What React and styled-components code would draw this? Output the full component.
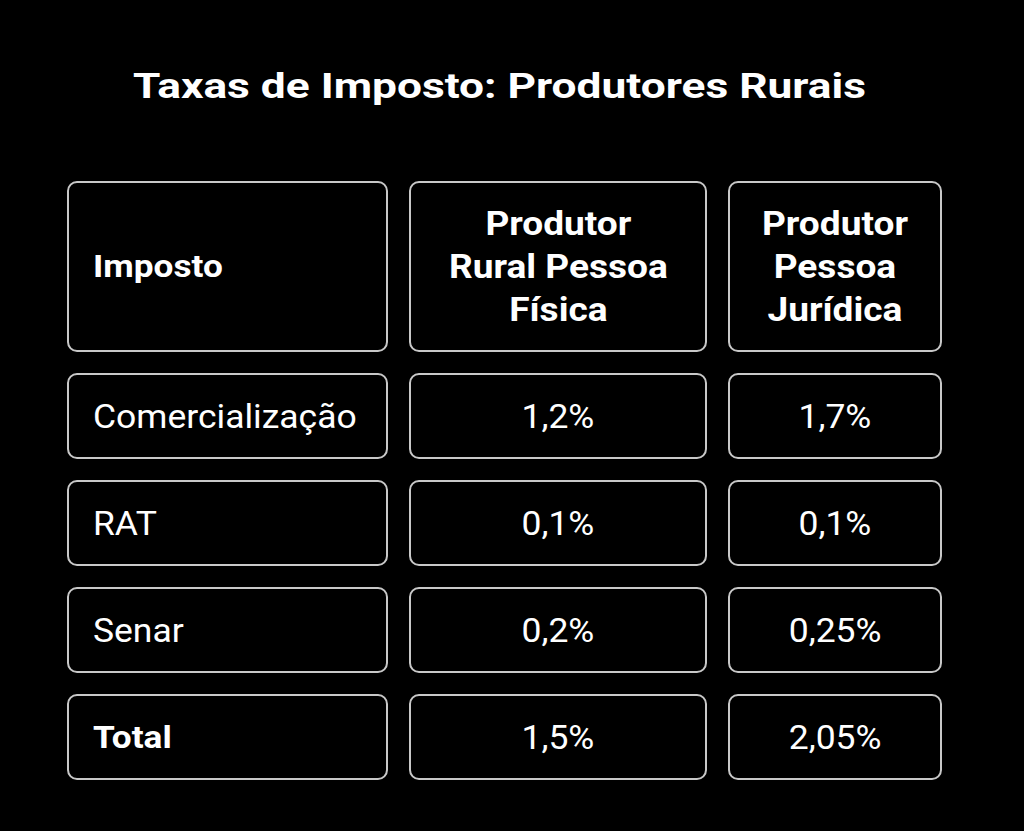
import React from 'react'
import styled, {createGlobalStyle} from 'styled-components'

const GlobalStyle = createGlobalStyle`
  html, body {
    margin: 0;
    padding: 0;
    background: #000;
  }
  body {
    font-family: 'Roboto', 'Liberation Sans', sans-serif;
    color: #fff;
  }
`
const Page = styled.div`
  width: 1024px;
  height: 831px;
  background: #000;
  display: flex;
  flex-direction: column;
  padding: 59px 0 0 67px;
  box-sizing: border-box;
`
const Title = styled.h1`
  margin: 0 0 0 66px;
  font-size: 35px;
  font-weight: 700;
  line-height: 56px;
  white-space: nowrap;
`
const Stretch = styled.span`
  display: inline-block;
  transform: scaleX(${props => props.sx});
  transform-origin: ${props => props.origin || 'center'};
  white-space: nowrap;
`
const Table = styled.div`
  margin-top: 66px;
  display: grid;
  grid-template-columns: 321px 298px 214px;
  grid-template-rows: 171px 86px 86px 86px 86px;
  column-gap: 21px;
  row-gap: 21px;
`
const Cell = styled.div`
  border: 2px solid #c8c8c8;
  border-radius: 10px;
  box-sizing: border-box;
  display: flex;
  align-items: center;
  justify-content: ${props => props.left ? 'flex-start' : 'center'};
  text-align: ${props => props.left ? 'left' : 'center'};
  padding: 0 ${props => props.left ? '24px' : '6px'};
  font-size: ${props => props.size || 33}px;
  font-weight: ${props => props.bold ? 700 : 400};
  line-height: 43px;
`

const rows = [
    ['Comercialização', '1,2%', '1,7%'],
    ['RAT', '0,1%', '0,1%'],
    ['Senar', '0,2%', '0,25%'],
]

const App = () => (
    <>
        <GlobalStyle/>
        <Page>
            <Title><Stretch sx={1.265} origin='left'>Taxas de Imposto: Produtores Rurais</Stretch></Title>
            <Table>
                <Cell left bold size={32}><Stretch sx={1.1} origin='left'>Imposto</Stretch></Cell>
                <Cell bold size={34}>
                    <Stretch sx={1.09}>Produtor<br/>Rural Pessoa<br/>Física</Stretch>
                </Cell>
                <Cell bold size={34}>
                    <Stretch sx={1.09}>Produtor<br/>Pessoa<br/>Jurídica</Stretch>
                </Cell>
                {rows.map(r => (
                    <React.Fragment key={r[0]}>
                        <Cell left><Stretch sx={1.075} origin='left'>{r[0]}</Stretch></Cell>
                        <Cell><Stretch sx={1.075}>{r[1]}</Stretch></Cell>
                        <Cell><Stretch sx={1.075}>{r[2]}</Stretch></Cell>
                    </React.Fragment>
                ))}
                <Cell left bold size={32}><Stretch sx={1.1} origin='left'>Total</Stretch></Cell>
                <Cell><Stretch sx={1.075}>1,5%</Stretch></Cell>
                <Cell><Stretch sx={1.075}>2,05%</Stretch></Cell>
            </Table>
        </Page>
    </>
)

export default App
